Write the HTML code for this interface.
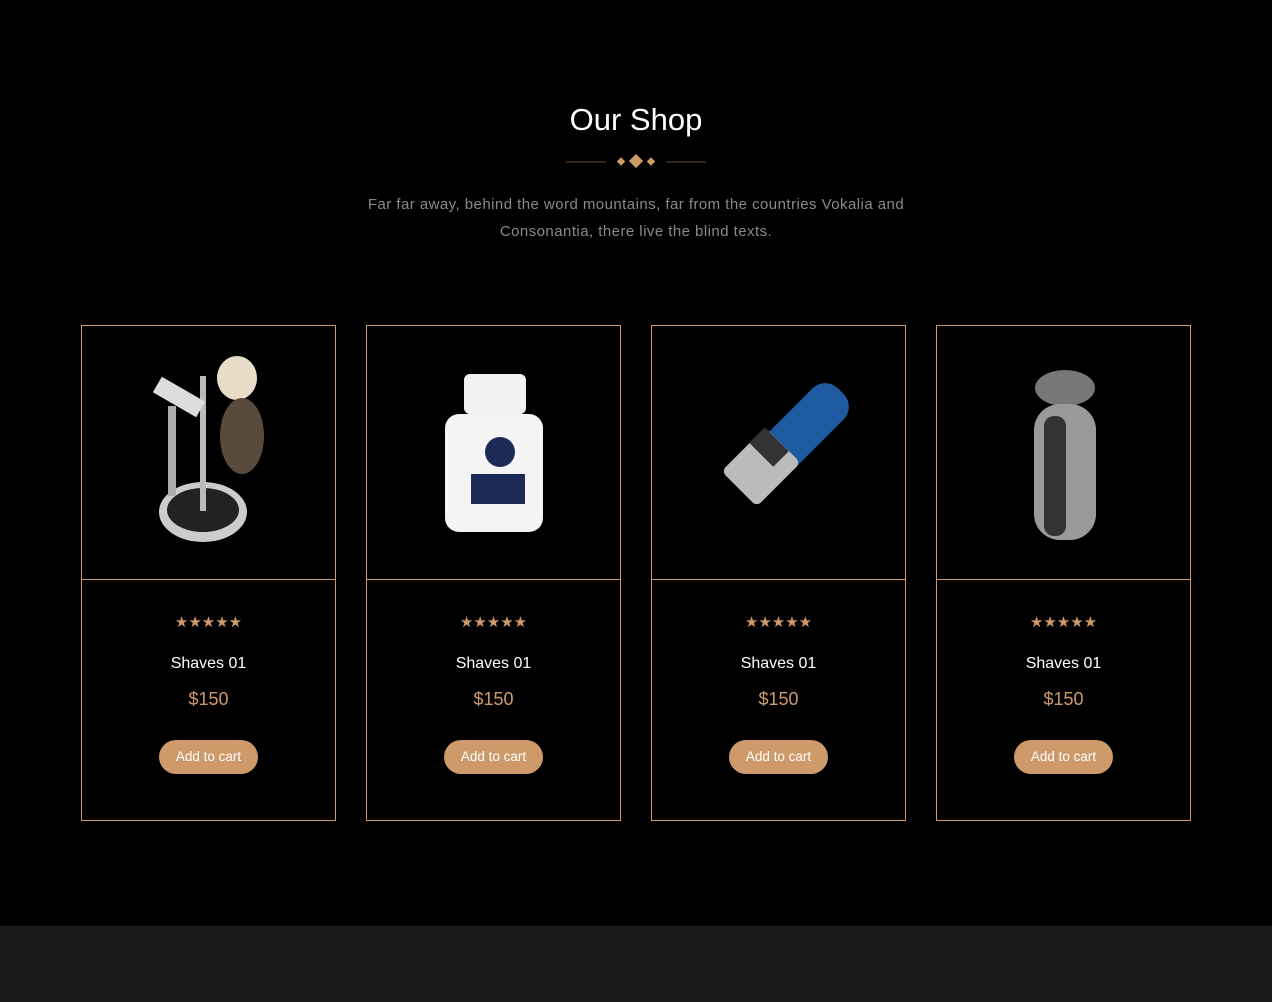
<!DOCTYPE html>
<html><head><meta charset="utf-8"><style>
*{margin:0;padding:0;box-sizing:border-box}
body{width:1272px;height:1002px;background:#000;font-family:"Liberation Sans",sans-serif;position:relative;overflow:hidden}
h1{position:absolute;top:102px;left:0;width:1272px;text-align:center;color:#fff;font-weight:normal;font-size:31px}
.div{position:absolute;top:154px;left:566px;width:140px;height:16px}
.sub{position:absolute;top:191px;left:336px;width:600px;text-align:center;color:#8a8a8a;font-size:15px;line-height:27px;letter-spacing:0.45px}
.card{position:absolute;top:325px;width:255px;height:496px;border:1px solid #cf9a6a}
.img{height:254px;border-bottom:1px solid #cf9a6a;position:relative}
.img svg{position:absolute;left:0;top:0}
.stars{position:absolute;top:289px;width:100%;text-align:center;color:#cf9a6a;font-size:15px;line-height:16px}
.name{position:absolute;top:329px;width:100%;text-align:center;color:#fff;font-size:16px}
.price{position:absolute;top:363px;width:100%;text-align:center;color:#cf9a6a;font-size:18px}
.btn{position:absolute;top:414px;left:77px;width:99px;height:34px;border-radius:17px;background:#cf9a6a;color:#fff;font-size:13.5px;text-align:center;line-height:34px}
.foot{position:absolute;top:926px;left:0;width:1272px;height:76px;background:#1b1b1b}
</style></head><body>
<h1>Our Shop</h1>
<svg class="div" viewBox="0 0 140 16"><line x1="0" y1="8" x2="40" y2="8" stroke="#6b4e34"/><line x1="100" y1="8" x2="140" y2="8" stroke="#6b4e34"/><rect x="52" y="4.5" width="6" height="6" fill="#cf9a6a" transform="rotate(45 55 7.5)"/><rect x="65" y="2" width="10" height="10" fill="#cf9a6a" transform="rotate(45 70 7)"/><rect x="82" y="4.5" width="6" height="6" fill="#cf9a6a" transform="rotate(45 85 7.5)"/></svg>
<div class="sub">Far far away, behind the word mountains, far from the countries Vokalia and Consonantia, there live the blind texts.</div>

<div class="card" style="left:81px"><div class="img"><svg width="254" height="254"><ellipse cx="121" cy="186" rx="44" ry="30" fill="#ccc"/><ellipse cx="121" cy="184" rx="36" ry="22" fill="#222"/><rect x="118" y="50" width="6" height="135" fill="#bbb"/><rect x="72" y="62" width="50" height="18" fill="#ddd" transform="rotate(30 97 71)"/><rect x="86" y="80" width="8" height="90" fill="#aaa"/><ellipse cx="155" cy="52" rx="20" ry="22" fill="#e8dcc8"/><ellipse cx="160" cy="110" rx="22" ry="38" fill="#5a4a3c"/></svg></div>
<div class="stars">★★★★★</div><div class="name">Shaves 01</div><div class="price">$150</div><div class="btn">Add to cart</div></div>

<div class="card" style="left:366px"><div class="img"><svg width="254" height="254"><rect x="97" y="48" width="62" height="40" rx="6" fill="#f2f2f2"/><rect x="78" y="88" width="98" height="118" rx="14" fill="#f4f4f4"/><circle cx="133" cy="126" r="15" fill="#1c2a55"/><rect x="104" y="148" width="54" height="30" fill="#1c2a55"/></svg></div>
<div class="stars">★★★★★</div><div class="name">Shaves 01</div><div class="price">$150</div><div class="btn">Add to cart</div></div>

<div class="card" style="left:651px"><div class="img"><svg width="254" height="254"><rect x="130" y="50" width="44" height="105" rx="18" fill="#1d5aa0" transform="rotate(45 152 102)"/><rect x="84" y="110" width="50" height="62" rx="6" fill="#bbb" transform="rotate(45 109 141)"/><rect x="100" y="110" width="34" height="22" fill="#333" transform="rotate(45 117 121)"/></svg></div>
<div class="stars">★★★★★</div><div class="name">Shaves 01</div><div class="price">$150</div><div class="btn">Add to cart</div></div>

<div class="card" style="left:936px"><div class="img"><svg width="254" height="254"><ellipse cx="128" cy="62" rx="30" ry="18" fill="#777"/><rect x="97" y="78" width="62" height="136" rx="26" fill="#9a9a9a"/><rect x="107" y="90" width="22" height="120" rx="10" fill="#333"/></svg></div>
<div class="stars">★★★★★</div><div class="name">Shaves 01</div><div class="price">$150</div><div class="btn">Add to cart</div></div>

<div class="foot"></div>
</body></html>
